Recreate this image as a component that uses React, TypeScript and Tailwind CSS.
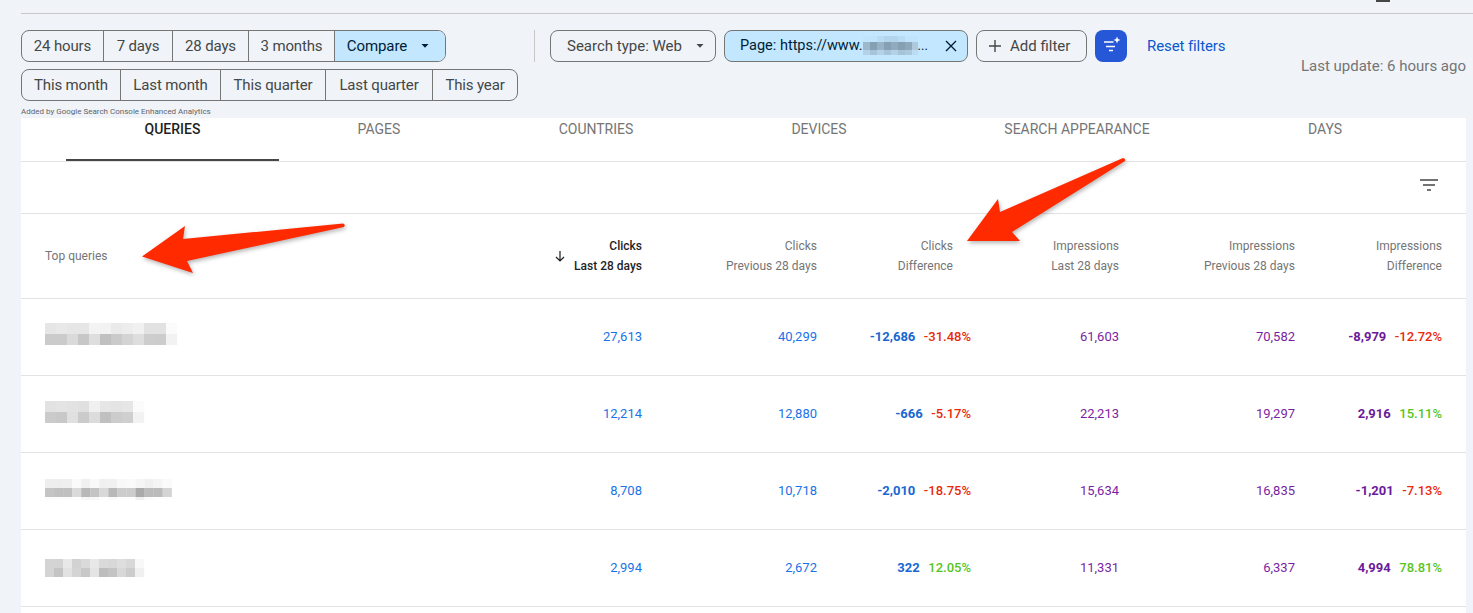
import React from "react";

const FONT = "font-['Roboto','Liberation_Sans',sans-serif]";

function Caret({ className = "" }: { className?: string }) {
  return (
    <svg width="8" height="4" viewBox="0 0 8 4" className={className}>
      <path d="M0.5 0h7L4 3.8z" fill="currentColor" />
    </svg>
  );
}

type Blur = { cells: number[][]; cw: number; ch: number };

function Pixelated({ b, w, h }: { b: Blur; w: number; h: number }) {
  return (
    <svg width={w} height={h} viewBox={`0 0 ${w} ${h}`} className="block">
      {b.cells.map((row, r) =>
        row.map((v, c) => (
          <rect
            key={`${r}-${c}`}
            x={c * b.cw}
            y={r * b.ch}
            width={b.cw + 0.2}
            height={b.ch + 0.2}
            fill={`rgb(${v},${v},${v})`}
          />
        ))
      )}
    </svg>
  );
}

const blurs: Blur[] = [
  {
    cw: 11, ch: 11,
    cells: [
      [0xe6, 0xe8, 0xe6, 0xe6, 0xf3, 0xf2, 0xea, 0xed, 0xf1, 0xe2, 0xe2, 0xfb],
      [0xcb, 0xcb, 0xda, 0xc7, 0xde, 0xc0, 0xca, 0xd4, 0xde, 0xcd, 0xcc, 0xf2],
    ],
  },
  {
    cw: 11, ch: 11,
    cells: [
      [0xe2, 0xe4, 0xe2, 0xe0, 0xf0, 0xe6, 0xe4, 0xe6, 0xfb],
      [0xcb, 0xc8, 0xe0, 0xcb, 0xdc, 0xc0, 0xcc, 0xcf, 0xf2],
    ],
  },
  {
    cw: 9.05, ch: 9,
    cells: [
      [0xee, 0xee, 0xef, 0xfa, 0xf0, 0xfa, 0xf0, 0xf0, 0xf8, 0xfa, 0xf5, 0xf0, 0xf5, 0xfa],
      [0xc4, 0xc0, 0xc0, 0xda, 0xb8, 0xc4, 0xd8, 0xb8, 0xcc, 0xcc, 0xaa, 0xbb, 0xbb, 0xd4],
      [0xfc, 0xfc, 0xfc, 0xfe, 0xf6, 0xf8, 0xfe, 0xfa, 0xfe, 0xfe, 0xf0, 0xfc, 0xfe, 0xfe],
    ],
  },
  {
    cw: 9, ch: 9,
    cells: [
      [0xd4, 0xd4, 0xe8, 0xd2, 0xda, 0xe8, 0xda, 0xd8, 0xde, 0xd8, 0xf8],
      [0xd4, 0xc4, 0xe2, 0xd4, 0xc8, 0xe4, 0xbd, 0xc4, 0xd8, 0xcc, 0xf0],
    ],
  },
];

const blurMargins = ["mb-[6px]", "mb-[4px]", "mb-[4px]", "mt-0"];

const urlBlur = [
  ["#bfe4fc", "#bfe4fc", "#b8dcf3", "#b2d5ec", "#b2d5ec", "#b8dcf3", "#bfe4fc", "#bfe4fc"],
  ["#9db8cb", "#86a0b3", "#98b2c6", "#86a0b3", "#92aabd", "#86a0b3", "#8ea7ba", "#afc9dc"],
  ["#b4d2e7", "#a6c3d8", "#b4d2e7", "#a8c4d9", "#b4d2e7", "#a6c3d8", "#acc8dd", "#bbdcf2"],
];

const rows = [
  { a: "27,613", b: "40,299", c: "-12,686", d: "-31.48%", dn: true, e: "61,603", f: "70,582", g: "-8,979", h: "-12.72%", hn: true },
  { a: "12,214", b: "12,880", c: "-666", d: "-5.17%", dn: true, e: "22,213", f: "19,297", g: "2,916", h: "15.11%", hn: false },
  { a: "8,708", b: "10,718", c: "-2,010", d: "-18.75%", dn: true, e: "15,634", f: "16,835", g: "-1,201", h: "-7.13%", hn: true },
  { a: "2,994", b: "2,672", c: "322", d: "12.05%", dn: false, e: "11,331", f: "6,337", g: "4,994", h: "78.81%", hn: false },
];

const COLS = "grid grid-cols-[621px_175px_154px_148px_176px_147px]";

function Seg({ children, w, active = false }: { children: React.ReactNode; w: string; active?: boolean }) {
  return (
    <div
      className={`${w} shrink-0 h-full flex items-center justify-center border-l border-[#747775] first:border-l-0 ${
        active ? "bg-[#c2e7ff] text-[#001d35] pr-[4px]" : "text-[#444746]"
      }`}
    >
      {children}
    </div>
  );
}

const tabs = [
  { t: "QUERIES", w: "w-[213px]", active: true },
  { t: "PAGES", w: "w-[200px]" },
  { t: "COUNTRIES", w: "w-[234px]" },
  { t: "DEVICES", w: "w-[212px]" },
  { t: "SEARCH APPEARANCE", w: "w-[304px]" },
  { t: "DAYS", w: "w-[192px]" },
];

function HeadCell({ top, bottom, dark = false, className = "" }: { top: string; bottom: string; dark?: boolean; className?: string }) {
  return (
    <div
      className={`flex flex-col items-end justify-center gap-[6px] text-[12px] leading-[14px] ${
        dark ? "text-[#1f1f1f] font-medium" : "text-[#757575] font-normal tracking-[0.02px]"
      } ${className}`}
    >
      <span>{top}</span>
      <span>{bottom}</span>
    </div>
  );
}

export default function App() {
  return (
    <div className={`${FONT} relative w-[1473px] h-[613px] overflow-hidden bg-[#f0f4f9]`}>
      {/* top rule */}
      <div className="h-[14px] ml-[21px] border-b border-[#c7c7c7] relative">
        <div className="absolute left-[1355px] top-0 w-[14px] h-[2px] bg-[#444746]" />
      </div>

      {/* filter bar */}
      <div className="h-[104px] pl-[21px] pt-[16px] flex">
        <div className="flex flex-col gap-[7px] w-[497px] shrink-0">
          <div className="flex h-[32px] w-[425px] rounded-[8px] border border-[#747775] overflow-hidden text-[15px] tracking-[-0.15px]">
            <Seg w="w-[81px]">24 hours</Seg>
            <Seg w="w-[69px]">7 days</Seg>
            <Seg w="w-[76px]">28 days</Seg>
            <Seg w="w-[86px]">3 months</Seg>
            <Seg w="w-[111px]" active>
              <span className="tracking-[-0.1px]">Compare</span>
              <Caret className="ml-[14px]" />
            </Seg>
          </div>
          <div className="flex h-[32px] w-[497px] rounded-[8px] border border-[#747775] overflow-hidden text-[15px] tracking-[-0.15px]">
            <Seg w="w-[98px]">This month</Seg>
            <Seg w="w-[100px]">Last month</Seg>
            <Seg w="w-[105px]">This quarter</Seg>
            <Seg w="w-[107px]">Last quarter</Seg>
            <Seg w="w-[85px]">This year</Seg>
          </div>
          <div className="text-[8px] leading-[10px] text-[#5f6368] -mt-[1px]">Added by Google Search Console Enhanced Analytics</div>
        </div>

        <div className="h-[32px] ml-[16px] border-l border-[#c7c7c7]" />

        <div className="ml-[15px] flex items-start gap-[8px] h-[32px] text-[15px]">
          <div className="h-[32px] w-[166px] rounded-[8px] border border-[#747775] flex items-center pl-[16px] text-[#444746]">
            <span>Search type: Web</span>
            <Caret className="ml-[14px]" />
          </div>
          <div className="h-[32px] w-[244px] rounded-[8px] border border-[#747775] bg-[#c2e7ff] flex items-center pl-[15px] text-[#001d35] text-[14.5px]">
            <span className="whitespace-nowrap">Page: https://www.</span>
            <svg width="55" height="19" viewBox="0 0 55 19" className="shrink-0 mt-[-1px]">
              {urlBlur.map((row, r) =>
                row.map((c, i) => (
                  <rect key={`${r}-${i}`} x={i * 7} y={[0, 6, 14][r]} width={7.2} height={[6, 8, 5][r]} fill={c} />
                ))
              )}
            </svg>
            <span className="text-[13px]">...</span>
            <svg width="12" height="12" viewBox="0 0 12 12" className="ml-[17px] text-[#001d35] shrink-0">
              <path d="M1 1l10 10M11 1L1 11" stroke="currentColor" strokeWidth="1.4" />
            </svg>
          </div>
          <div className="h-[32px] w-[111px] rounded-[8px] border border-[#747775] flex items-center pl-[11px] text-[#444746]">
            <svg width="14" height="14" viewBox="0 0 14 14">
              <path d="M7 1v12M1 7h12" stroke="currentColor" strokeWidth="1.4" />
            </svg>
            <span className="ml-[8px]">Add filter</span>
          </div>
          <div className="h-[32px] w-[32px] rounded-[8px] bg-[#2557d6] flex items-center justify-center">
            <svg width="20" height="20" viewBox="0 0 20 20" fill="none">
              <path d="M3 6h9.500M5 10.500h9M8 14.500h4" stroke="#fff" strokeWidth="1.4" />
              <path d="M16 0.500l1 2.500 2.500 1-2.500 1-1 2.500-1-2.500-2.500-1 2.500-1z" fill="#fff" />
            </svg>
          </div>
          <span className="ml-[12px] h-[32px] flex items-center text-[#0b57d0] tracking-[-0.1px]">Reset filters</span>
        </div>

        <div className="absolute right-[7px] top-[57px] text-[15px] leading-[18px] text-[#757575]">Last update: 6 hours ago</div>
      </div>

      {/* panel */}
      <div className="ml-[21px] w-[1445px] bg-white h-[495px]">
        <div className="h-[44px] px-[45px] flex border-b border-[#e3e3e3]">
          {tabs.map((t) => (
            <div
              key={t.t}
              className={`${t.w} h-[43px] text-center text-[14px] leading-[23px] relative ${
                t.active ? "text-[#1f1f1f] font-medium" : "text-[#757575]"
              }`}
            >
              {t.t}
              {t.active && <div className="absolute left-0 right-0 bottom-0 h-[2px] bg-[#444746]" />}
            </div>
          ))}
        </div>

        <div className="h-[52px] border-b border-[#e3e3e3] flex items-center justify-end pr-[28px] pb-[6px]">
          <svg width="18" height="12" viewBox="0 0 18 12">
            <path d="M0 1h18M3 6h12M7 11h4" stroke="#444746" strokeWidth="1.6" />
          </svg>
        </div>

        <div className={`${COLS} h-[85px] border-b border-[#e3e3e3]`}>
          <div className="pl-[24px] flex items-center justify-between">
            <span className="text-[12px] font-normal text-[#757575]">Top queries</span>
            <div className="flex items-center gap-[8px]">
              <svg width="12" height="12" viewBox="0 0 12 12" className="text-[#1f1f1f]">
                <path d="M6 1v10M2 7l4 4 4-4" fill="none" stroke="currentColor" strokeWidth="1.2" />
              </svg>
              <HeadCell top="Clicks" bottom="Last 28 days" dark />
            </div>
          </div>
          <HeadCell top="Clicks" bottom="Previous 28 days" />
          <HeadCell top="Clicks" bottom="Difference" className="pr-[18px]" />
          <HeadCell top="Impressions" bottom="Last 28 days" />
          <HeadCell top="Impressions" bottom="Previous 28 days" />
          <HeadCell top="Impressions" bottom="Difference" />
        </div>

        {rows.map((r, i) => (
          <div key={i} className={`${COLS} h-[77px] border-b border-[#e3e3e3] items-center text-[13px]`}>
            <div className="flex items-center justify-between">
              <div className={`pl-[24px] ${blurMargins[i]}`}>
                <Pixelated b={blurs[i]} w={134} h={i === 2 ? 21 : i === 3 ? 18 : 22} />
              </div>
              <span className="text-[#1a73e8]">{r.a}</span>
            </div>
            <span className="text-right text-[#1a73e8]">{r.b}</span>
            <div className="flex justify-end gap-[8.5px] font-medium">
              <span className="text-[#1967d2] font-bold">{r.c}</span>
              <span className={r.dn ? "text-[#e8290b]" : "text-[#58c51c]"}>{r.d}</span>
            </div>
            <span className="text-right text-[#7b1fa2]">{r.e}</span>
            <span className="text-right text-[#7b1fa2]">{r.f}</span>
            <div className="flex justify-end gap-[8.5px] font-medium">
              <span className="text-[#6a1b9a] font-bold">{r.g}</span>
              <span className={r.hn ? "text-[#e8290b]" : "text-[#58c51c]"}>{r.h}</span>
            </div>
          </div>
        ))}
      </div>

      {/* red annotation arrows */}
      <svg width="1473" height="613" viewBox="0 0 1473 613" className="absolute inset-0 pointer-events-none drop-shadow-[1px_2px_2px_rgba(0,0,0,0.3)]">
        <path d="M142 256.500L185 226L183 239L343 223.500Q346 224.500 344 227L187 261L193 273Z" fill="#ff2a00" />
        <path d="M967 241L998 199L1000 212L1123 158Q1126 158.500 1125 161L1012 232L1020 241Z" fill="#ff2a00" />
      </svg>
    </div>
  );
}
